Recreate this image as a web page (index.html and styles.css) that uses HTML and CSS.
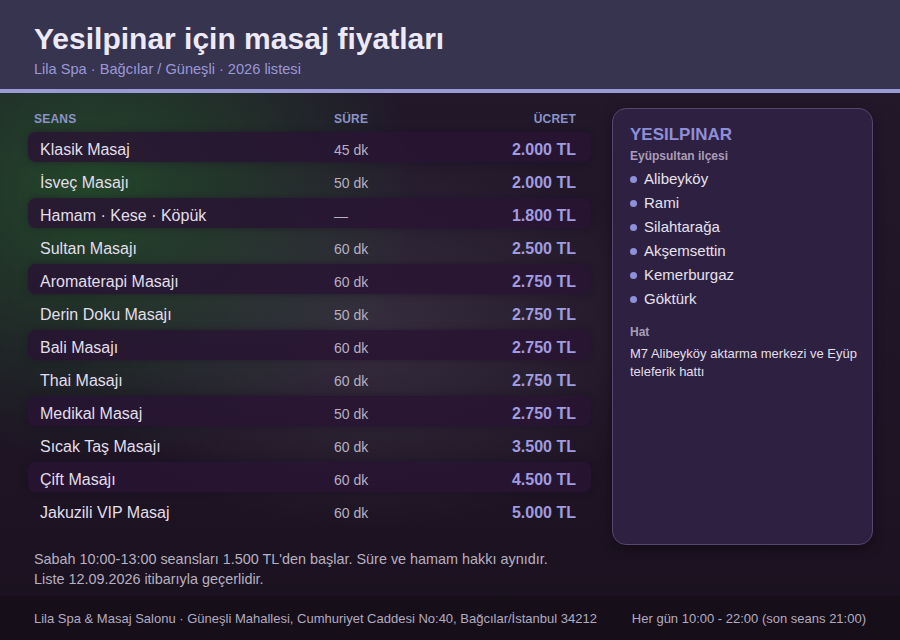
FILE: index.html
```html
<!DOCTYPE html>
<html lang="tr">
<head>
<meta charset="utf-8">
<title>Yesilpinar için masaj fiyatları</title>
<link rel="stylesheet" href="styles.css">
</head>
<body>
<div class="page">
  <header class="top">
    <h1 class="title">Yesilpinar için masaj fiyatları</h1>
    <div class="subtitle">Lila Spa · Bağcılar / Güneşli · 2026 listesi</div>
  </header>
  <main class="main">
    <section class="prices">
      <div class="thead">
        <span>Seans</span><span>Süre</span><span class="r">Ücret</span>
      </div>
      <div class="rows">
        <div class="row alt"><span class="name">Klasik Masaj</span><span class="dur">45 dk</span><span class="price">2.000 TL</span></div>
        <div class="row"><span class="name">İsveç Masajı</span><span class="dur">50 dk</span><span class="price">2.000 TL</span></div>
        <div class="row alt"><span class="name">Hamam · Kese · Köpük</span><span class="dur">—</span><span class="price">1.800 TL</span></div>
        <div class="row"><span class="name">Sultan Masajı</span><span class="dur">60 dk</span><span class="price">2.500 TL</span></div>
        <div class="row alt"><span class="name">Aromaterapi Masajı</span><span class="dur">60 dk</span><span class="price">2.750 TL</span></div>
        <div class="row"><span class="name">Derin Doku Masajı</span><span class="dur">50 dk</span><span class="price">2.750 TL</span></div>
        <div class="row alt"><span class="name">Bali Masajı</span><span class="dur">60 dk</span><span class="price">2.750 TL</span></div>
        <div class="row"><span class="name">Thai Masajı</span><span class="dur">60 dk</span><span class="price">2.750 TL</span></div>
        <div class="row alt"><span class="name">Medikal Masaj</span><span class="dur">50 dk</span><span class="price">2.750 TL</span></div>
        <div class="row"><span class="name">Sıcak Taş Masajı</span><span class="dur">60 dk</span><span class="price">3.500 TL</span></div>
        <div class="row alt"><span class="name">Çift Masajı</span><span class="dur">60 dk</span><span class="price">4.500 TL</span></div>
        <div class="row"><span class="name">Jakuzili VIP Masaj</span><span class="dur">60 dk</span><span class="price">5.000 TL</span></div>
      </div>
      <div class="notes">
        <p>Sabah 10:00-13:00 seansları 1.500 TL'den başlar. Süre ve hamam hakkı aynıdır.</p>
        <p>Liste 12.09.2026 itibarıyla geçerlidir.</p>
      </div>
    </section>
    <aside class="card">
      <h2 class="card-title">YESILPINAR</h2>
      <div class="card-label">Eyüpsultan ilçesi</div>
      <ul class="areas">
        <li>Alibeyköy</li>
        <li>Rami</li>
        <li>Silahtarağa</li>
        <li>Akşemsettin</li>
        <li>Kemerburgaz</li>
        <li>Göktürk</li>
      </ul>
      <div class="card-label hat">Hat</div>
      <p class="line">M7 Alibeyköy aktarma merkezi ve Eyüp teleferik hattı</p>
    </aside>
  </main>
  <footer class="foot">
    <span>Lila Spa &amp; Masaj Salonu · Güneşli Mahallesi, Cumhuriyet Caddesi No:40, Bağcılar/İstanbul 34212</span>
    <span>Her gün 10:00 - 22:00 (son seans 21:00)</span>
  </footer>
</div>
</body>
</html>
```

FILE: styles.css
```css
* { box-sizing: border-box; }
html, body { margin: 0; padding: 0; }
body {
  width: 900px;
  height: 640px;
  overflow: hidden;
  font-family: "Liberation Sans", Arial, sans-serif;
  background: #1b1220;
}
.page {
  width: 900px;
  height: 640px;
  display: flex;
  flex-direction: column;
  background:
    radial-gradient(ellipse 330px 270px at 90px 190px, rgba(36, 100, 42, 0.62), rgba(36, 100, 42, 0) 100%),
    radial-gradient(ellipse 300px 200px at 370px 330px, rgba(85, 80, 95, 0.42), rgba(85, 80, 95, 0) 100%),
    linear-gradient(180deg, #22192b 0%, #1f1527 50%, #1b1220 100%);
}
.top {
  height: 93px;
  flex: none;
  background: #37344f;
  border-bottom: 4px solid #9a9ad6;
  padding: 21px 34px 0;
}
.title {
  margin: 0;
  font-size: 30px;
  line-height: 36px;
  font-weight: 700;
  color: #ede9f6;
}
.subtitle {
  margin-top: 3px;
  font-size: 14.6px;
  line-height: 18px;
  color: #9b98d8;
}
.main {
  flex: 1;
  display: flex;
  gap: 21px;
  padding: 15px 27px 0 28px;
}
.prices {
  width: 563px;
  flex: none;
  display: flex;
  flex-direction: column;
}
.thead, .row {
  display: grid;
  grid-template-columns: 300px 1fr auto;
  align-items: center;
}
.thead {
  height: 21px;
  padding: 0 15px 0 6px;
  font-size: 12px;
  font-weight: 700;
  text-transform: uppercase;
  color: #8c93c9;
  letter-spacing: 0.2px;
}
.thead .r { text-align: right; }
.rows {
  margin-top: 3px;
  display: flex;
  flex-direction: column;
  gap: 3px;
}
.row {
  height: 30px;
  padding: 0 15px 0 12px;
  grid-template-columns: 294px 1fr auto;
  border-radius: 8px;
}
.row.alt {
  background: rgba(40, 20, 50, 0.85);
  box-shadow: 0 0 6px rgba(30, 15, 40, 0.5);
}
.name {
  font-size: 16px;
  color: #e2dfea;
  padding-top: 5px;
}
.dur {
  font-size: 14px;
  color: #b7b0c0;
  padding-top: 5px;
}
.price {
  font-size: 16px;
  font-weight: 700;
  color: #a19ce0;
  padding-top: 5px;
}
.notes {
  margin-top: 24px;
  padding-left: 6px;
}
.notes p {
  margin: 0;
  font-size: 14.4px;
  line-height: 20px;
  color: #b7b0c0;
}
.card {
  width: 261px;
  height: 437px;
  flex: none;
  background: #2e2040;
  border: 1px solid #55466e;
  border-radius: 14px;
  padding: 15px 8px 15px 17px;
  box-shadow: 0 4px 12px rgba(0, 0, 0, 0.35);
}
.card-title {
  margin: 0;
  font-size: 17px;
  line-height: 22px;
  font-weight: 700;
  color: #8f8fd9;
}
.card-label {
  margin-top: 2px;
  font-size: 12px;
  line-height: 16px;
  font-weight: 700;
  color: #a99db8;
}
.card-label.hat { margin-top: 14px; }
.areas {
  list-style: none;
  margin: 2px 0 0;
  padding: 0;
}
.areas li {
  display: flex;
  align-items: center;
  gap: 7px;
  height: 24px;
  font-size: 15px;
  color: #e6e2ef;
}
.areas li::before {
  content: "";
  width: 7px;
  height: 7px;
  border-radius: 50%;
  background: #8f8fd9;
  margin-top: 3px;
}
.line {
  margin: 5px 0 0;
  font-size: 13px;
  line-height: 18px;
  color: #e2dfea;
}
.foot {
  height: 44px;
  flex: none;
  display: flex;
  justify-content: space-between;
  align-items: center;
  padding: 0 34px;
  background: #160f1a;
  font-size: 13px;
  color: #b2abc0;
}
```
